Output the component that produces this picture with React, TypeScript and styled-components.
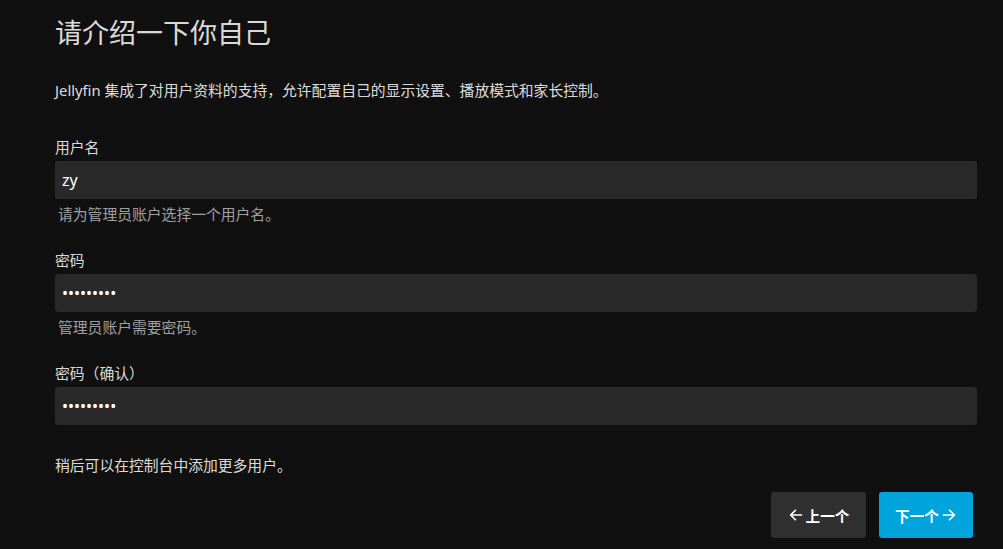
import React from "react";
import styled, { createGlobalStyle } from "styled-components";

const GlobalStyle = createGlobalStyle`
    html, body {
        margin: 0;
        padding: 0;
        background: #101010;
        color: rgba(255, 255, 255, 0.87);
        font-family: "Noto Sans", "Noto Sans CJK SC", sans-serif;
    }
`;

const ArrowLeft = () => (
    <svg width="16" height="16" viewBox="0 0 24 24" fill="none" stroke="currentColor" strokeWidth="2.4" strokeLinecap="square">
        <path d="M20 12H5M11 5l-7 7 7 7" />
    </svg>
);

const ArrowRight = () => (
    <svg width="16" height="16" viewBox="0 0 24 24" fill="none" stroke="currentColor" strokeWidth="2.4" strokeLinecap="square">
        <path d="M4 12h15M13 5l7 7-7 7" />
    </svg>
);

interface FieldProps {
    label: string;
    value: string;
    type?: string;
    help?: string;
}

const Field: React.FC<FieldProps> = (props) => {
    return (
        <FieldContainer>
            <Label>{props.label}</Label>
            <Input type={props.type || "text"} defaultValue={props.value} />
            {props.help && <Help>{props.help}</Help>}
        </FieldContainer>
    );
};

const App: React.FC = () => {
    return (
        <>
            <GlobalStyle />
            <Page>
                <Title>请介绍一下你自己</Title>
                <Intro>Jellyfin 集成了对用户资料的支持，允许配置自己的显示设置、播放模式和家长控制。</Intro>
                <Fields>
                    <Field label="用户名" value="zy" help="请为管理员账户选择一个用户名。" />
                    <Field label="密码" value="123456789" type="password" help="管理员账户需要密码。" />
                    <Field label="密码（确认）" value="123456789" type="password" />
                </Fields>
                <Note>稍后可以在控制台中添加更多用户。</Note>
                <Buttons>
                    <Button>
                        <ArrowLeft />
                        <span>上一个</span>
                    </Button>
                    <Button primary>
                        <span>下一个</span>
                        <ArrowRight />
                    </Button>
                </Buttons>
            </Page>
        </>
    );
};

const Page = styled.div`
    display: flex;
    flex-direction: column;
    padding: 0 26px 0 55px;
    height: 549px;
    box-sizing: border-box;
    overflow: hidden;
`;

const Title = styled.h1`
    margin: 14px 0 0;
    font-size: 27px;
    font-weight: 400;
    line-height: 38px;
`;

const Intro = styled.p`
    margin: 28px 0 0;
    font-size: 14.8px;
    line-height: 20px;
`;

const Fields = styled.div`
    display: flex;
    flex-direction: column;
    gap: 26px;
    margin-top: 37px;
`;

const FieldContainer = styled.div`
    display: flex;
    flex-direction: column;
`;

const Label = styled.label`
    font-size: 14.8px;
    line-height: 20px;
    margin-bottom: 4px;
`;

const Input = styled.input`
    height: 38px;
    box-sizing: border-box;
    background: #292929;
    border: none;
    border-radius: 3px;
    padding: 0 7px;
    color: #fff;
    font-family: inherit;
    font-size: 16px;
    outline: none;
`;

const Help = styled.div`
    margin-top: 5px;
    padding-left: 3px;
    font-size: 14.8px;
    line-height: 20px;
    color: #a0a0a0;
`;

const Note = styled.p`
    margin: 30px 0 0;
    font-size: 14.8px;
    line-height: 20px;
`;

const Buttons = styled.div`
    display: flex;
    justify-content: flex-end;
    gap: 13px;
    margin-top: 17px;
    padding-right: 4px;
`;

const Button = styled.button<{ primary?: boolean }>`
    display: flex;
    align-items: center;
    justify-content: center;
    gap: 2px;
    width: ${(p) => (p.primary ? "94px" : "95px")};
    height: 46px;
    border: none;
    border-radius: 3px;
    background: ${(p) => (p.primary ? "#00a4dc" : "#303030")};
    color: #fff;
    font-family: inherit;
    font-size: 14.6px;
    font-weight: 700;
    cursor: pointer;
`;

export default App;
